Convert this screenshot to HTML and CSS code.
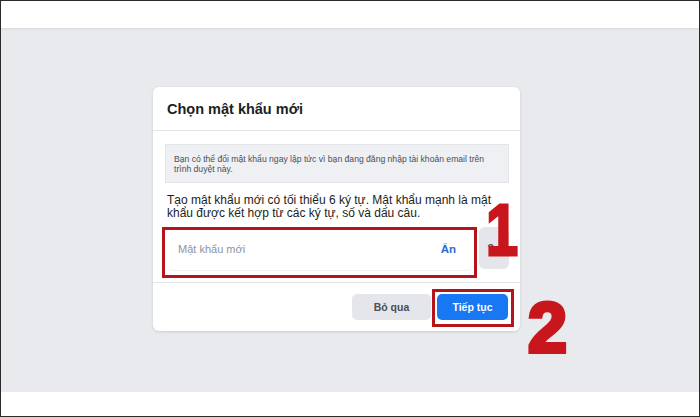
FILE: index.html
```html
<!DOCTYPE html>
<html lang="vi">
<head>
<meta charset="utf-8">
<title>Chọn mật khẩu mới</title>
<link rel="stylesheet" href="styles.css">
</head>
<body>
<div class="frame">
  <div class="topbar"></div>
  <div class="stage">
    <div class="card">
      <div class="card-header">
        <h2 class="title">Chọn mật khẩu mới</h2>
      </div>
      <div class="card-body">
        <div class="info">Bạn có thể đổi mật khẩu ngay lập tức vì bạn đang đăng nhập tài khoản email trên trình duyệt này.</div>
        <p class="desc">Tạo mật khẩu mới có tối thiểu 6 ký tự. Mật khẩu mạnh là mật khẩu được kết hợp từ các ký tự, số và dấu câu.</p>
        <div class="input-row">
          <div class="input">
            <span class="placeholder">Mật khẩu mới</span>
            <span class="hide">Ẩn</span>
          </div>
          <div class="help">?</div>
        </div>
      </div>
      <div class="card-footer">
        <button class="btn btn-gray">Bỏ qua</button>
        <button class="btn btn-blue">Tiếp tục</button>
      </div>
      <div class="mark mark-input"></div>
      <div class="mark mark-btn"></div>
      <div class="num num-1">1</div>
      <div class="num num-2">2</div>
    </div>
  </div>
  <div class="bottombar"></div>
</div>
</body>
</html>
```
FILE: styles.css
```css
* { box-sizing: border-box; }
html, body { margin: 0; padding: 0; }
body {
  width: 700px;
  height: 417px;
  font-family: "Liberation Sans", Arial, Helvetica, sans-serif;
  color: #1c1e21;
  overflow: hidden;
}
.frame {
  width: 700px;
  height: 417px;
  border: 1px solid #2b2b2b;
  display: flex;
  flex-direction: column;
  background: #fff;
}
.topbar {
  height: 27px;
  background: #fff;
  box-shadow: 0 1px 2px rgba(0,0,0,0.08);
  position: relative;
  z-index: 1;
}
.stage {
  height: 364px;
  background: #e9eaee;
  padding: 59px 0 0 152px;
}
.bottombar { flex: 1; background: #fff; }

.card {
  position: relative;
  width: 367px;
  background: #fff;
  border-radius: 6px;
  box-shadow: 0 1px 3px rgba(0,0,0,0.12);
}
.card-header {
  height: 44px;
  border-bottom: 1px solid #e3e5e8;
  display: flex;
  align-items: center;
  padding: 0 14px;
}
.title {
  margin: 0;
  font-size: 14.5px;
  font-weight: bold;
  color: #1c1e21;
  padding-top: 1px;
}
.card-body {
  padding: 13px 11px 12px 12px;
}
.info {
  background: #eef0f4;
  border: 1px solid #e4e6ea;
  font-size: 8.6px;
  line-height: 10px;
  color: #4b4f56;
  padding: 9px 20px 9px 8px;
  height: 39px;
}
.desc {
  margin: 11px 0 0 2px;
  font-size: 12px;
  line-height: 13px;
  color: #1c1e21;
}
.input-row {
  display: flex;
  gap: 6px;
  margin-top: 8px;
  padding-left: 2px;
}
.input {
  flex: 1;
  height: 42px;
  border-radius: 6px;
  background: #fff;
  box-shadow: 0 1px 1px rgba(0,0,0,0.06);
  display: flex;
  align-items: center;
  justify-content: space-between;
  padding: 0 17px 0 11px;
}
.placeholder {
  font-size: 11px;
  color: #8d949e;
}
.hide {
  font-size: 11.5px;
  font-weight: bold;
  color: #2d6bd0;
}
.help {
  width: 30px;
  height: 42px;
  margin-top: -1px;
  background: #e4e6eb;
  border-radius: 6px;
  display: flex;
  align-items: center;
  justify-content: center;
  padding-right: 7px;
  font-size: 11px;
  font-weight: bold;
  color: #4b4f56;
}
.card-footer {
  border-top: 1px solid #e3e5e8;
  display: flex;
  justify-content: flex-end;
  gap: 6px;
  padding: 11px 12px 11px 0;
}
.btn {
  height: 26px;
  border: none;
  border-radius: 5px;
  font-family: inherit;
  font-size: 10.5px;
  font-weight: bold;
  padding: 0;
}
.btn-gray {
  width: 79px;
  background: #e4e6eb;
  color: #4b4f56;
}
.btn-blue {
  width: 71px;
  background: #1877f2;
  color: #fff;
}

/* annotations */
.mark {
  position: absolute;
  border: 3px solid #b5141b;
}
.mark-input {
  left: 9px;
  top: 140px;
  width: 315px;
  height: 51px;
}
.mark-btn {
  left: 279px;
  top: 202px;
  width: 82px;
  height: 38px;
}
.num {
  position: absolute;
  font-family: "Liberation Sans", Arial, sans-serif;
  font-weight: bold;
  color: #c8161d;
}
.num-1 {
  left: 333px;
  top: 107px;
  font-size: 72px;
  line-height: 72px;
  -webkit-text-stroke: 3px #c8161d;
  transform: scaleX(0.8);
  transform-origin: left top;
}
.num-2 {
  left: 375px;
  top: 206px;
  font-size: 70px;
  line-height: 70px;
  -webkit-text-stroke: 4px #c8161d;
}
```
